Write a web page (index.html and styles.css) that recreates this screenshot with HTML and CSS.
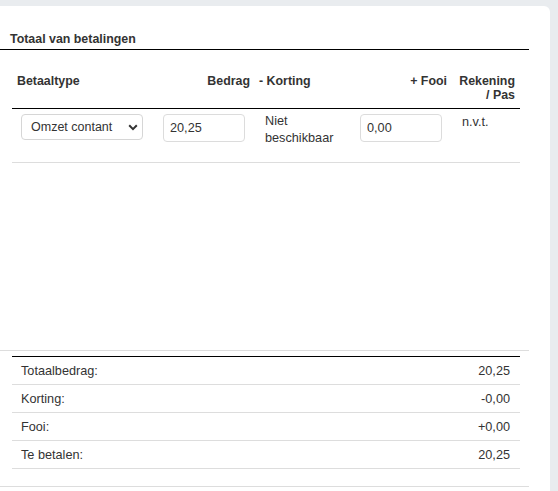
FILE: index.html
```html
<!DOCTYPE html>
<html lang="nl">
<head>
<meta charset="utf-8">
<link rel="stylesheet" href="styles.css">
</head>
<body>
<div class="card">
  <div class="section-title">Totaal van betalingen</div>
  <table class="payments">
    <colgroup>
      <col class="c1"><col class="c2"><col class="c3"><col class="c4"><col class="c5">
    </colgroup>
    <thead>
      <tr>
        <th class="left">Betaaltype</th>
        <th class="right">Bedrag</th>
        <th class="left korting">- Korting</th>
        <th class="right">+ Fooi</th>
        <th class="right">Rekening<br>/ Pas</th>
      </tr>
    </thead>
    <tbody>
      <tr>
        <td>
          <div class="select-wrap">
            <select class="select"><option>Omzet contant</option></select>
            <svg class="chev" width="10" height="7" viewBox="0 0 10 7"><path d="M1.2 1.3 L5 5.1 L8.8 1.3" fill="none" stroke="#333" stroke-width="2"/></svg>
          </div>
        </td>
        <td><input class="input" type="text" value="20,25"></td>
        <td class="text">Niet beschikbaar</td>
        <td><input class="input" type="text" value="0,00"></td>
        <td class="text nvt">n.v.t.</td>
      </tr>
    </tbody>
  </table>
  <div class="spacer"></div>
  <div class="footer">
    <table class="summary">
      <tr><td>Totaalbedrag:</td><td class="val">20,25</td></tr>
      <tr><td>Korting:</td><td class="val">-0,00</td></tr>
      <tr><td>Fooi:</td><td class="val">+0,00</td></tr>
      <tr><td>Te betalen:</td><td class="val">20,25</td></tr>
    </table>
  </div>
</div>
</body>
</html>
```
FILE: styles.css
```css
html, body {
  margin: 0;
  padding: 0;
  background: #e9ecef;
  font-family: "Liberation Sans", Arial, sans-serif;
  font-size: 12.7px;
  color: #333;
}
.card {
  margin-top: 6px;
  width: 550px;
  height: 485px;
  background: #fff;
  border-top-right-radius: 6px;
  box-sizing: border-box;
  padding-top: 26px;
}
.section-title {
  width: 529px;
  box-sizing: border-box;
  padding: 0 0 3px 10px;
  font-weight: bold;
  font-size: 12.4px;
  line-height: 14px;
  border-bottom: 1px solid #000;
}
.payments {
  margin: 19px 0 0 12px;
  width: 508px;
  border-collapse: collapse;
  table-layout: fixed;
}
.c1 { width: 141px; }
.c2 { width: 102px; }
.c3 { width: 95px; }
.c4 { width: 102px; }
.c5 { width: 68px; }
.payments th {
  font-weight: bold;
  font-size: 12.4px;
  vertical-align: top;
  padding: 5px 5px 6px;
  line-height: 14px;
  border-bottom: 1px solid #000;
}
.payments th.left { text-align: left; }
.payments th.right { text-align: right; }
.payments th.korting { padding-left: 4px; }
.payments td {
  vertical-align: top;
  padding: 5px 10px 15px;
  border-bottom: 1px solid #ddd;
}
.payments td:first-child { padding-left: 9px; }
.payments td.text { line-height: 17px; padding-top: 4px; }
.payments td.nvt { line-height: 14px; padding-top: 6px; }
.select-wrap {
  position: relative;
  width: 122px;
  height: 26px;
}
.select {
  -webkit-appearance: none;
  appearance: none;
  width: 122px;
  height: 26px;
  box-sizing: border-box;
  border: 1px solid #d6d6d6;
  border-radius: 4px;
  background: #fff;
  font-family: "Liberation Sans", Arial, sans-serif;
  font-size: 12.5px;
  color: #333;
  padding: 0 0 0 9px;
  margin: 0;
}
.chev {
  position: absolute;
  right: 5px;
  top: 10px;
  pointer-events: none;
}
.input {
  width: 82px;
  height: 28px;
  box-sizing: border-box;
  border: 1px solid #dcdcdc;
  border-radius: 4px;
  padding: 0 6px;
  margin: 0;
  font-family: "Liberation Sans", Arial, sans-serif;
  font-size: 12.7px;
  color: #333;
}
.spacer { height: 187px; }
.footer {
  width: 529px;
  border-top: 1px solid #ddd;
  border-bottom: 1px solid #ddd;
  padding: 5px 0 17px;
}
.summary {
  margin-left: 12px;
  width: 508px;
  border-collapse: collapse;
  border-top: 1px solid #000;
}
.summary td {
  padding: 7px 10px 6px 9px;
  line-height: 14px;
  border-bottom: 1px solid #ddd;
}
.summary td.val { text-align: right; }
```
